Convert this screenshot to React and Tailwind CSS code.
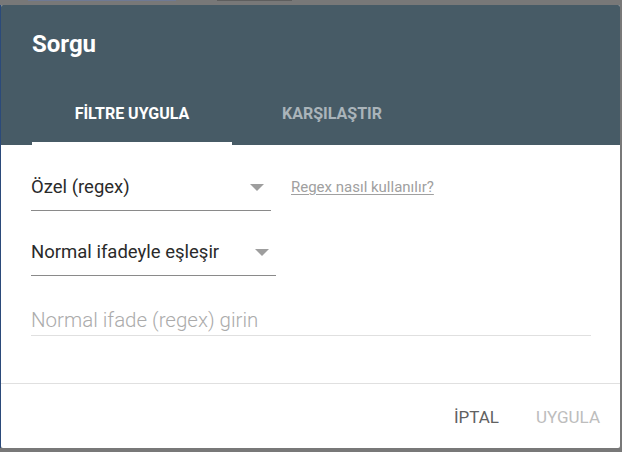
export default function App() {
  const font = { fontFamily: 'Roboto, "Liberation Sans", sans-serif' };
  return (
    <div className="w-[622px] h-[452px] bg-[#787878] overflow-hidden" style={font}>
      <div className="flex h-[5px]">
        <div className="w-[28px]" />
        <div className="w-[148px] h-[1px] bg-[#6f7a94]" />
        <div className="w-[41px]" />
        <div className="w-[75px] h-[1px] bg-[#5e5e5e]" />
      </div>
      <div className="flex">
        <div className="w-[1px] bg-[#2b4a7a]" />
        <div className="w-[619px] h-[443px] bg-white rounded-[2px] overflow-hidden flex flex-col">
          <div className="bg-[#475b66] h-[140px] flex flex-col px-[31px]">
            <div className="pt-[23px] text-[24px] leading-[32px] font-bold text-white">Sorgu</div>
            <div className="flex flex-1 items-end">
              <div className="w-[200px] flex flex-col items-center">
                <div className="text-[16px] leading-[20px] font-bold text-white">FİLTRE UYGULA</div>
                <div className="mt-[18px] h-[3px] w-full bg-white" />
              </div>
              <div className="w-[200px] flex flex-col items-center">
                <div className="text-[16px] leading-[20px] font-bold text-[#aab4ba]">KARŞILAŞTIR</div>
                <div className="mt-[18px] h-[3px] w-full" />
              </div>
            </div>
          </div>
          <div className="flex-1 flex flex-col px-[30px]">
            <div className="flex items-start pt-[28px]">
              <div className="w-[240px] h-[38px] flex items-start justify-between border-b border-[#8a8a8a]">
                <span className="text-[18.5px] leading-[28px] text-[#2a2a2a]">Özel (regex)</span>
                <svg width="14" height="7" viewBox="0 0 14 7" className="mt-[11px] mr-[7px]">
                  <path d="M0 0 L14 0 L7 7 Z" fill="#9e9e9e" />
                </svg>
              </div>
              <a className="ml-[20px] mt-[4px] text-[15px] leading-[20px] text-[#a0a0a0] underline underline-offset-[2px]">Regex nasıl kullanılır?</a>
            </div>
            <div className="flex pt-[27px]">
              <div className="w-[245px] h-[38px] flex items-start justify-between border-b border-[#8a8a8a]">
                <span className="text-[18.5px] leading-[28px] text-[#2a2a2a]">Normal ifadeyle eşleşir</span>
                <svg width="14" height="7" viewBox="0 0 14 7" className="mt-[11px] mr-[7px]">
                  <path d="M0 0 L14 0 L7 7 Z" fill="#9e9e9e" />
                </svg>
              </div>
            </div>
            <div className="mt-[30px] w-[560px] border-b border-[#e0e0e0]">
              <div className="text-[20.5px] leading-[28px] font-light text-[#ababab] pb-[1px]">Normal ifade (regex) girin</div>
            </div>
          </div>
          <div className="h-[65px] border-t border-[#e0e0e0] flex items-center justify-end pr-[20px] pt-[4px] gap-[37px]">
            <span className="text-[17px] text-[#616161]">İPTAL</span>
            <span className="text-[17px] text-[#bdbdbd]">UYGULA</span>
          </div>
        </div>
      </div>
    </div>
  );
}
